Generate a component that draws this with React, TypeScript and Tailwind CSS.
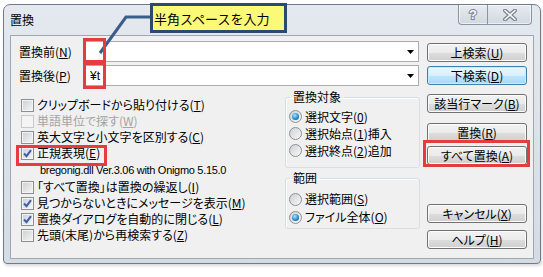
import React from "react";

// Win7 風の部品
function Check({ checked = false, disabled = false }: { checked?: boolean; disabled?: boolean }) {
  return (
    <div
      className={`w-[13px] h-[13px] shrink-0 border flex items-center justify-center ${
        disabled
          ? "border-[#c8c8c8] bg-[#f4f4f4]"
          : "border-[#8e8f8f] bg-[linear-gradient(135deg,#c9ced4,#f7f7f7)] shadow-[inset_0_0_0_1px_#f4f4f4]"
      }`}
    >
      {checked && (
        <svg width="11" height="11" viewBox="0 0 11 11">
          <path d="M2 5.5 L4.5 8.2 L9 2.2" fill="none" stroke="#3f5ea3" strokeWidth="2" />
        </svg>
      )}
    </div>
  );
}

function Radio({ checked = false }: { checked?: boolean }) {
  return (
    <div className="w-[13px] h-[13px] shrink-0 rounded-full border border-[#8e8f8f] bg-[linear-gradient(135deg,#cdd1d6,#f8f8f8)] flex items-center justify-center">
      {checked && (
        <div className="w-[7px] h-[7px] rounded-full bg-[radial-gradient(circle_at_40%_35%,#a8e4ff,#1d86cf_60%,#0d4f8f)]" />
      )}
    </div>
  );
}

function Btn({ children, def = false }: { children: React.ReactNode; def?: boolean }) {
  return (
    <div
      className={`h-[19px] w-[100px] rounded-[3px] border flex items-center justify-center text-[12px] leading-none text-black ${
        def
          ? "border-[#3c7fb1] bg-[linear-gradient(#eaf6fd,#d9f0fc_50%,#bee6fd_51%,#a7d9f5)] shadow-[inset_0_0_0_1px_#c9ecfc]"
          : "border-[#707070] bg-[linear-gradient(#f2f2f2,#ebebeb_50%,#dddddd_51%,#cfcfcf)] shadow-[inset_0_0_0_1px_#fcfcfc]"
      }`}
    >
      {children}
    </div>
  );
}

function Combo({ value }: { value?: string }) {
  return (
    <div className="h-[21px] w-[334px] border border-[#abadb3] bg-white flex items-center">
      <span className="flex-1 pl-[4px] text-[12px] font-['Liberation_Sans',sans-serif] text-black">{value}</span>
      <svg width="7" height="4" viewBox="0 0 7 4" className="mr-[4px]">
        <path d="M0 0 H7 L3.5 4 Z" fill="#000" />
      </svg>
    </div>
  );
}

function CheckRow({ label, checked, disabled, h = "h-[16px]" }: { label: React.ReactNode; checked?: boolean; disabled?: boolean; h?: string }) {
  return (
    <div className={`${h} flex items-center gap-[3px]`}>
      <Check checked={checked} disabled={disabled} />
      <span className={disabled ? "text-[#a3a3a3]" : "text-black"}>{label}</span>
    </div>
  );
}

function RadioRow({ label, checked, h }: { label: React.ReactNode; checked?: boolean; h: string }) {
  return (
    <div className={`${h} flex items-center gap-[3px] pl-[3px]`}>
      <Radio checked={checked} />
      <span>{label}</span>
    </div>
  );
}

export default function App() {
  return (
    <div className="relative w-[543px] h-[277px] overflow-hidden bg-white pl-[3px] pt-[4px] font-['Noto_Sans_CJK_JP','Noto_Sans_CJK_SC',sans-serif] [font-feature-settings:'palt'] text-[12px] leading-none">
      {/* ウィンドウ */}
      <div className="w-[538px] h-[260px] border border-[#6f7b8b] rounded-t-[7px] rounded-b-[4px] bg-[linear-gradient(#e4e9ef,#d5dbe3)] shadow-[1px_2px_3px_rgba(0,0,0,0.15)] flex flex-col">
        {/* タイトルバー */}
        <div className="h-[30px] flex justify-between">
          <div className="pl-[6px] flex items-center text-[12px] text-black">置換</div>
          <div className="mr-[8px] h-[20px] w-[74px] flex border border-t-0 border-[#8a94a2] rounded-b-[4px] bg-[linear-gradient(#e8ecf1,#d2d8df)] shadow-[inset_0_0_0_1px_rgba(255,255,255,0.6)]">
            <div className="w-[29px] flex items-center justify-center border-r border-[#8a94a2] text-[13px] font-bold font-['Liberation_Sans',sans-serif] text-[#f6f8fa] [paint-order:stroke] [-webkit-text-stroke:2px_#7b8594]">
              ?
            </div>
            <div className="flex-1 flex items-center justify-center">
              <svg width="14" height="12" viewBox="0 0 14 12">
                <path d="M2 1.5 L12 10.5 M12 1.5 L2 10.5" stroke="#7b8594" strokeWidth="4" strokeLinecap="round" />
                <path d="M2 1.5 L12 10.5 M12 1.5 L2 10.5" stroke="#f6f8fa" strokeWidth="1.6" strokeLinecap="round" />
              </svg>
            </div>
          </div>
        </div>

        {/* クライアント領域 */}
        <div className="ml-[6px] w-[524px] h-[224px] border border-[#9ea7b3] bg-[#f0f0f0] flex">
          {/* 左側 */}
          <div className="w-[409px] flex flex-col pt-[5px]">
            <div className="h-[21px] flex items-center">
              <div className="w-[74px] pl-[8px]">置換前(<u>N</u>)</div>
              <Combo />
            </div>
            <div className="h-[21px] mt-[3px] flex items-center">
              <div className="w-[74px] pl-[8px]">置換後(<u>P</u>)</div>
              <Combo value="¥t" />
            </div>

            <div className="mt-[4px] flex">
              {/* チェックボックス */}
              <div className="w-[274px] pl-[10px] pt-[7px] flex flex-col">
                <CheckRow label={<>クリップボードから貼り付ける(<u>T</u>)</>} />
                <CheckRow label={<>単語単位で探す(<u>W</u>)</>} disabled />
                <CheckRow label={<>英大文字と小文字を区別する(<u>C</u>)</>} />
                <CheckRow label={<>正規表現(<u>E</u>)</>} checked />
                <div className="h-[18px] flex items-center pl-[19px] font-['Liberation_Sans',sans-serif] text-[11px] tracking-[-0.3px] text-black">
                  bregonig.dll Ver.3.06 with Onigmo 5.15.0
                </div>
                <CheckRow label={<>「すべて置換」は置換の繰返し(<u>I</u>)</>} />
                <CheckRow label={<>見つからないときにメッセージを表示(<u>M</u>)</>} checked />
                <CheckRow label={<>置換ダイアログを自動的に閉じる(<u>L</u>)</>} checked />
                <CheckRow label={<>先頭(末尾)から再検索する(<u>Z</u>)</>} />
              </div>

              {/* グループ */}
              <div className="w-[135px] flex flex-col">
                <fieldset className="border border-[#d5dfe5] rounded-[3px] shadow-[inset_1px_1px_0_#fff] pt-[4px] pb-[8px]">
                  <legend className="ml-[4px] px-[3px] h-[14px] leading-[14px]">置換対象</legend>
                  <RadioRow h="h-[17px]" label={<>選択文字(<u>0</u>)</>} checked />
                  <RadioRow h="h-[17px]" label={<>選択始点(<u>1</u>)挿入</>} />
                  <RadioRow h="h-[17px]" label={<>選択終点(<u>2</u>)追加</>} />
                </fieldset>
                <fieldset className="mt-[3px] border border-[#d5dfe5] rounded-[3px] shadow-[inset_1px_1px_0_#fff] pt-[5px] pb-[2px]">
                  <legend className="ml-[4px] px-[3px] h-[14px] leading-[14px]">範囲</legend>
                  <RadioRow h="h-[18px]" label={<>選択範囲(<u>S</u>)</>} />
                  <RadioRow h="h-[18px]" label={<>ファイル全体(<u>O</u>)</>} checked />
                </fieldset>
              </div>
            </div>
          </div>

          {/* ボタン列 */}
          <div className="ml-[7px] pt-[7px] flex flex-col">
            <Btn>上検索(<u>U</u>)</Btn>
            <div className="mt-[4px]"><Btn def>下検索(<u>D</u>)</Btn></div>
            <div className="mt-[9px]"><Btn>該当行マーク(<u>B</u>)</Btn></div>
            <div className="mt-[10px]"><Btn>置換(<u>R</u>)</Btn></div>
            <div className="mt-[4px]"><Btn>すべて置換(<u>A</u>)</Btn></div>
            <div className="mt-[39px]"><Btn>キャンセル(<u>X</u>)</Btn></div>
            <div className="mt-[7px]"><Btn>ヘルプ(<u>H</u>)</Btn></div>
          </div>
        </div>
      </div>

      {/* 注釈（オーバーレイ） */}
      <svg className="absolute left-0 top-0" width="543" height="277">
        <path d="M100 53 L126 17 L152 17" fill="none" stroke="#3a5d89" strokeWidth="3" />
      </svg>
      <div className="absolute left-[150px] top-[3px] w-[137px] h-[30px] border-[3px] border-[#2c4a6e] bg-[#fafa78] pl-[1px] flex items-center text-[13px] text-black [font-feature-settings:normal]">
        半角スペースを入力
      </div>
      <div className="absolute left-[83px] top-[38px] w-[23px] h-[25px] border-[3px] border-[#e63b3f]" />
      <div className="absolute left-[83px] top-[62px] w-[23px] h-[27px] border-[3px] border-[#e63b3f]" />
      <div className="absolute left-[16px] top-[145px] w-[91px] h-[21px] border-[3px] border-[#e63b3f]" />
      <div className="absolute left-[423px] top-[140px] w-[107px] h-[27px] border-[3px] border-[#e63b3f]" />
    </div>
  );
}
